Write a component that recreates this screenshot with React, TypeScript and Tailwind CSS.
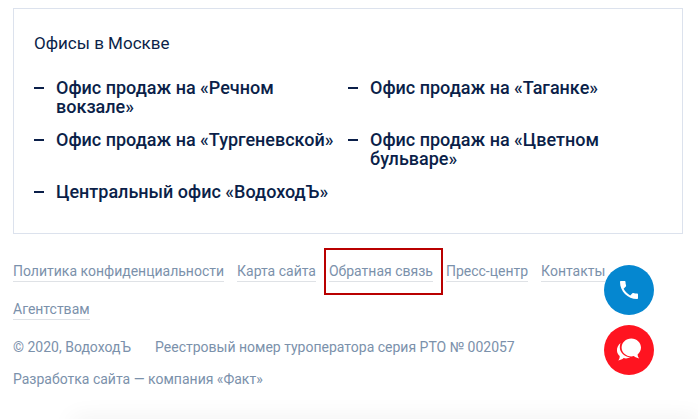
import { MdPhone } from 'react-icons/md';

const offices = [
  'Офис продаж на «Речном вокзале»',
  'Офис продаж на «Таганке»',
  'Офис продаж на «Тургеневской»',
  'Офис продаж на «Цветном бульваре»',
  'Центральный офис «ВодоходЪ»',
];

const links = [
  { title: 'Политика конфиденциальности' },
  { title: 'Карта сайта' },
  { title: 'Обратная связь', marked: true },
  { title: 'Пресс-центр' },
  { title: 'Контакты' },
  { title: 'Агентствам' },
];

const ChatIcon = () => (
  <svg viewBox="0 0 26 24" className="h-6 w-[26px]" fill="currentColor" aria-hidden="true">
    <path d="M4.500 5C2 7 .7 10 1 13c.2 2 1.200 3.700 2.700 5 .1 1.700-.4 3.200-1.400 4.400 2.100-.2 3.900-1 5.300-2.300 2.300.6 4.700.3 6.700-.8C8.300 18.800 3.800 14.500 3.800 9.300c0-1.500.2-2.900.7-4.300z" />
    <path d="M15.300.5c5.400 0 9.700 4 9.700 9 0 2.800-1.300 5.200-3.400 6.900 0 1.500.6 2.900 1.600 4-2-.2-3.900-1-5.300-2.300-.8.2-1.700.3-2.600.3-5.400 0-9.700-4-9.700-8.900s4.300-9 9.700-9z" />
  </svg>
);

const Offices = () => (
  <section className="border border-[#dce2ed] px-5 pt-6 pb-8">
    <h2 className="text-[17px] leading-5 text-[#0b1f49]">Офисы в Москве</h2>
    <ul className="mt-[25px] grid grid-cols-2 gap-y-[14px]">
      {offices.map((office) => (
        <li key={office} className="flex gap-3 text-lg leading-[19px] font-medium text-[#0b1f49]">
          <span className="mt-[9px] h-0.5 w-[10px] shrink-0 bg-[#0b1f49]" />
          <a href="#">{office}</a>
        </li>
      ))}
    </ul>
  </section>
);

const Footer = () => (
  <footer className="pt-[18px] text-sm leading-5 text-[#7b91ab]">
    <nav>
      <ul className="flex flex-wrap gap-x-[13px]">
        {links.map((link) => (
          <li key={link.title} className="relative flex h-[38px] items-center">
            <a href="#" className="border-b border-[#dfe2e6]">{link.title}</a>
            {link.marked && (
              <span className="pointer-events-none absolute -right-[10px] -left-[5px] -top-1 h-[47px] border-2 border-[#b90000]" />
            )}
          </li>
        ))}
      </ul>
    </nav>
    <div className="mt-[9px] flex flex-wrap gap-x-6">
      <span>© 2020, ВодоходЪ</span>
      <span>Реестровый номер туроператора серия РТО № 002057</span>
    </div>
    <p className="mt-3">Разработка сайта — компания «Факт»</p>
  </footer>
);

export default function App() {
  return (
    <div className="relative min-h-screen overflow-hidden bg-white pt-2 pr-[15px] pl-[13px] font-['Roboto','Liberation_Sans',sans-serif]">
      <Offices />
      <Footer />
      <div className="pointer-events-none fixed right-0 -bottom-4 left-[72px] h-4 shadow-[0_0_24px_rgba(0,0,0,0.07)]" />
      <div className="fixed right-11 bottom-11 flex flex-col gap-[10px] text-white">
        <button type="button" aria-label="Позвонить" className="flex size-[50px] items-center justify-center rounded-full bg-[#0587d0]">
          <MdPhone className="size-6" />
        </button>
        <button type="button" aria-label="Открыть чат" className="flex size-[50px] items-center justify-center rounded-full bg-[#ff1420]">
          <ChatIcon />
        </button>
      </div>
    </div>
  );
}
